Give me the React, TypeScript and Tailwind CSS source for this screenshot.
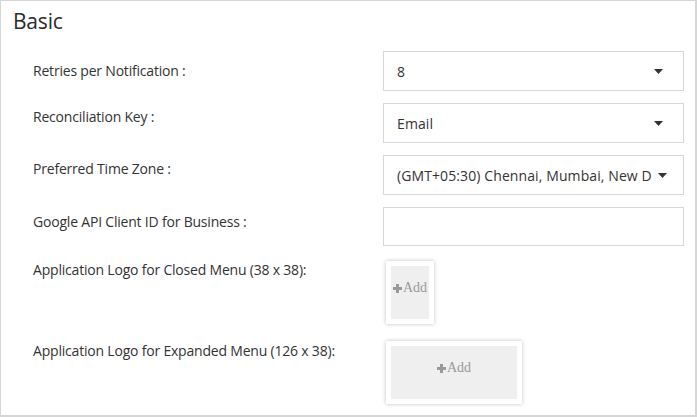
import React from 'react'

function Caret() {
  return (
    <svg width="9" height="5" viewBox="0 0 9 5" className="shrink-0">
      <path d="M0 0h9L4.5 5z" fill="#333" />
    </svg>
  )
}

function SelectBox({ value }: { value: string }) {
  return (
    <div className="w-[301px] h-[40px] border border-[#d3d9df] bg-white flex items-center pl-[13px] pr-[20px] gap-[6px]">
      <span className="flex-1 whitespace-nowrap text-[14px] tracking-[0.1px] text-[#333]">{value}</span>
      <Caret />
    </div>
  )
}

function Plus() {
  return (
    <svg width="9" height="9" viewBox="0 0 9 9" className="mr-[1px]">
      <path d="M3 0h3v3h3v3H6v3H3V6H0V3h3z" fill="#999" />
    </svg>
  )
}

function AddTile({ w }: { w: string }) {
  return (
    <div className="bg-white p-[5px] shadow-[0_0_4px_rgba(0,0,0,0.25)] inline-block">
      <div className={`${w} h-[53px] bg-[#efefef] flex items-start justify-center pt-[14px] text-[#999] text-[14px] leading-[16px] font-['Liberation_Serif',serif] tracking-normal whitespace-nowrap`}>
        <span className="flex items-center">
          <Plus />
          Add
        </span>
      </div>
    </div>
  )
}

export default function App() {
  const label = 'w-[350px] shrink-0 text-[14px] text-[#333] leading-[20px]'
  return (
    <div className="w-[697px] h-[417px] bg-white border border-r-2 border-b-2 border-[#d6d6d6] font-['Open_Sans',sans-serif] tracking-[-0.2px]">
      <h2 className="text-[21px] leading-none text-[#2a2a2a] pl-[12px] pt-[10px]">Basic</h2>
      <div className="pl-[32px] pt-[19px] flex flex-col">
        <div className="flex items-start">
          <div className={`${label} pt-[10px]`}>Retries per Notification :</div>
          <SelectBox value="8" />
        </div>
        <div className="flex items-start mt-[12px]">
          <div className={`${label} pt-[4px]`}>Reconciliation Key :</div>
          <SelectBox value="Email" />
        </div>
        <div className="flex items-start mt-[12px]">
          <div className={`${label} pt-[4px]`}>Preferred Time Zone :</div>
          <SelectBox value="(GMT+05:30) Chennai, Mumbai, New D" />
        </div>
        <div className="flex items-start mt-[12px]">
          <div className={`${label} pt-[5px]`}>Google API Client ID for Business :</div>
          <div className="w-[301px] h-[39px] border border-[#d3d9df] bg-white" />
        </div>
        <div className="flex items-start mt-[14px]">
          <div className={label}>Application Logo for Closed Menu (38 x 38):</div>
          <div className="pl-[3px] pt-[1px]">
            <AddTile w="w-[38px]" />
          </div>
        </div>
        <div className="flex items-start mt-[17px]">
          <div className={label}>Application Logo for Expanded Menu (126 x 38):</div>
          <div className="pl-[3px]">
            <AddTile w="w-[126px]" />
          </div>
        </div>
      </div>
    </div>
  )
}
